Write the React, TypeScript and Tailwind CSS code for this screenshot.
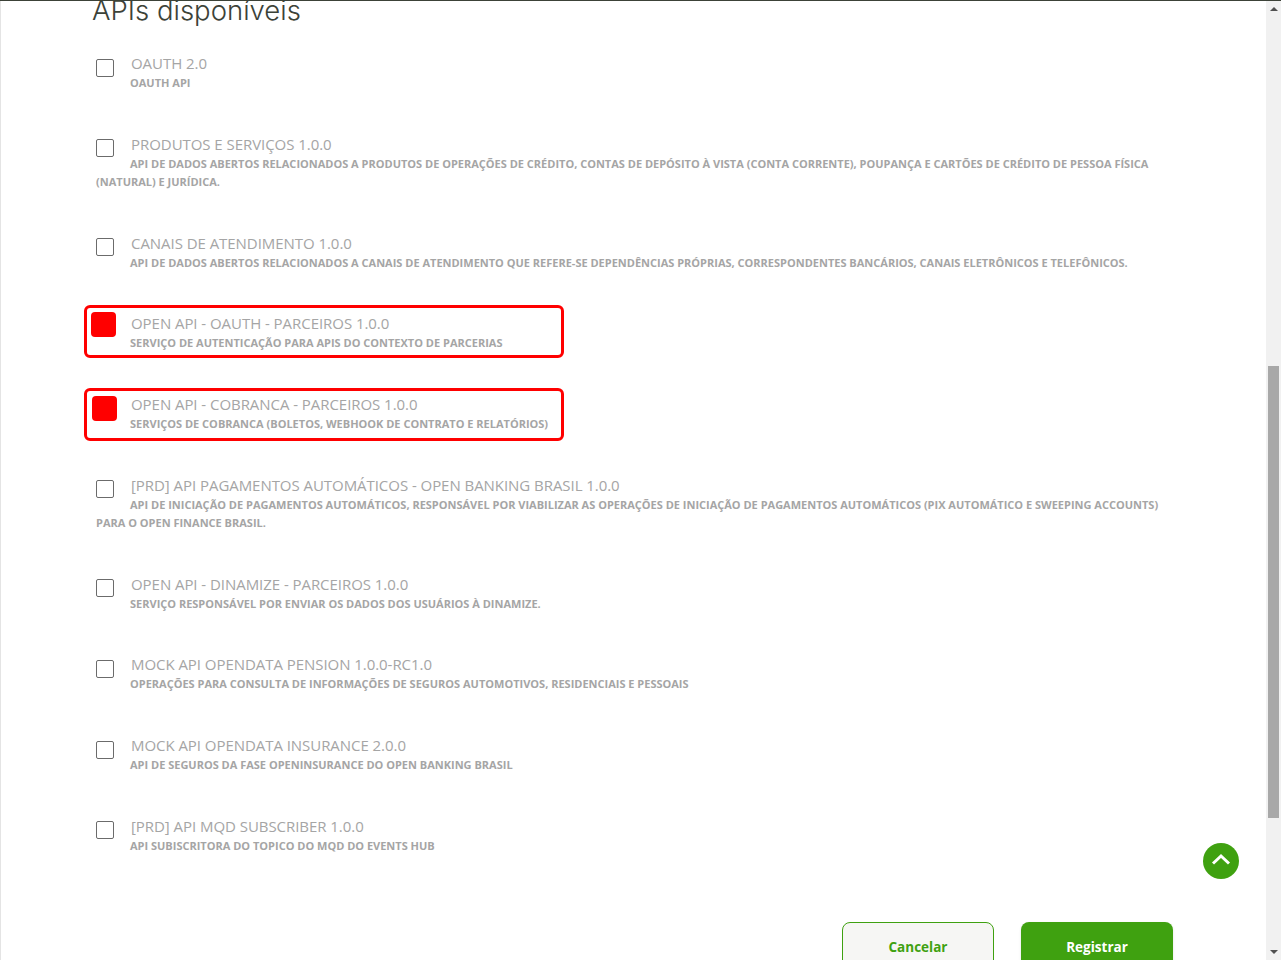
const apis = [
	{ name: 'OAUTH 2.0', desc: 'OAUTH API' },
	{
		name: 'PRODUTOS E SERVIÇOS 1.0.0',
		desc: 'API DE DADOS ABERTOS RELACIONADOS A PRODUTOS DE OPERAÇÕES DE CRÉDITO, CONTAS DE DEPÓSITO À VISTA (CONTA CORRENTE), POUPANÇA E CARTÕES DE CRÉDITO DE PESSOA FÍSICA (NATURAL) E JURÍDICA.',
	},
	{
		name: 'CANAIS DE ATENDIMENTO 1.0.0',
		desc: 'API DE DADOS ABERTOS RELACIONADOS A CANAIS DE ATENDIMENTO QUE REFERE-SE DEPENDÊNCIAS PRÓPRIAS, CORRESPONDENTES BANCÁRIOS, CANAIS ELETRÔNICOS E TELEFÔNICOS.',
	},
	{
		name: 'OPEN API - OAUTH - PARCEIROS 1.0.0',
		desc: 'SERVIÇO DE AUTENTICAÇÃO PARA APIS DO CONTEXTO DE PARCERIAS',
		marked: 'first',
	},
	{
		name: 'OPEN API - COBRANCA - PARCEIROS 1.0.0',
		desc: 'SERVIÇOS DE COBRANCA (BOLETOS, WEBHOOK DE CONTRATO E RELATÓRIOS)',
		marked: 'second',
	},
	{
		name: '[PRD] API PAGAMENTOS AUTOMÁTICOS - OPEN BANKING BRASIL 1.0.0',
		desc: 'API DE INICIAÇÃO DE PAGAMENTOS AUTOMÁTICOS, RESPONSÁVEL POR VIABILIZAR AS OPERAÇÕES DE INICIAÇÃO DE PAGAMENTOS AUTOMÁTICOS (PIX AUTOMÁTICO E SWEEPING ACCOUNTS) PARA O OPEN FINANCE BRASIL.',
	},
	{
		name: 'OPEN API - DINAMIZE - PARCEIROS 1.0.0',
		desc: 'SERVIÇO RESPONSÁVEL POR ENVIAR OS DADOS DOS USUÁRIOS À DINAMIZE.',
	},
	{
		name: 'MOCK API OPENDATA PENSION 1.0.0-RC1.0',
		desc: 'OPERAÇÕES PARA CONSULTA DE INFORMAÇÕES DE SEGUROS AUTOMOTIVOS, RESIDENCIAIS E PESSOAIS',
	},
	{
		name: 'MOCK API OPENDATA INSURANCE 2.0.0',
		desc: 'API DE SEGUROS DA FASE OPENINSURANCE DO OPEN BANKING BRASIL',
	},
	{ name: '[PRD] API MQD SUBSCRIBER 1.0.0', desc: 'API SUBISCRITORA DO TOPICO DO MQD DO EVENTS HUB' },
];

function ApiRow({ name, desc, marked }: { name: string; desc: string; marked?: string }) {
	return (
		<div className="relative mb-[41.78px] flow-root">
			<div className="float-left h-[37px] w-[34px] pt-[5.5px]">
				<div className="h-[18px] w-[18px] rounded-[2px] border border-[#6b6b6b] bg-white" />
			</div>
			<div className="h-[21px] indent-[1px] text-[15px] leading-[20px] tracking-[-0.05px] text-[#a5a5a5]">{name}</div>
			<div className="text-[11px] leading-[18px] font-bold text-[#a5a5a5]">{desc}</div>
			{marked === 'first' && (
				<>
					<div className="absolute top-[-8px] left-[-12px] h-[53px] w-[480px] rounded-[6px] border-[3px] border-[#ff0000]" />
					<div className="absolute top-[-1px] left-[-5px] h-[25px] w-[25px] rounded-[4px] bg-[#ff0000]" />
				</>
			)}
			{marked === 'second' && (
				<>
					<div className="absolute top-[-6px] left-[-12px] h-[53px] w-[480px] rounded-[6px] border-[3px] border-[#ff0000]" />
					<div className="absolute top-[1.5px] left-[-4px] h-[25px] w-[25px] rounded-[4px] bg-[#ff0000]" />
				</>
			)}
		</div>
	);
}

export default function App() {
	return (
		<div className="relative flex h-[960px] overflow-hidden border-t border-[#3c4238] bg-white font-['Open_Sans',sans-serif]">
			<main className="min-w-0 flex-1 border-l border-[#e4e4e4] pr-[93px] pl-[95px]">
				<h1 className="mt-[-1px] mb-[33px] ml-[-4px] font-['Inter',sans-serif] text-[27.5px] leading-[20px] font-light text-[#3c4238]">
					APIs disponíveis
				</h1>
				{apis.map((api) => (
					<ApiRow key={api.name} {...api} />
				))}
				<div className="flex justify-end gap-[27px] pt-[25px]">
					<button className="h-[60px] w-[152px] rounded-[8px] border border-[#3fa110] bg-[#f6f6f4] pb-[10px] text-[13.5px] font-bold text-[#3fa110]">
						Cancelar
					</button>
					<button className="h-[60px] w-[152px] rounded-[8px] bg-[#3fa110] pb-[10px] text-[13.5px] font-bold text-white shadow-sm">
						Registrar
					</button>
				</div>
			</main>
			<div className="relative flex w-[15px] flex-col items-center bg-[#f1f1f1]">
				<div className="mt-[6px] h-0 w-0 border-x-[4px] border-b-[4px] border-x-transparent border-b-[#505050]" />
				<div className="mt-[355px] h-[452px] w-[11px] bg-[#a8a8a8]" />
				<div className="mt-auto mb-[6px] h-0 w-0 border-x-[4px] border-t-[4px] border-x-transparent border-t-[#505050]" />
			</div>
			<button className="absolute top-[842px] left-[1203px] flex h-[36px] w-[36px] items-center justify-center rounded-full bg-[#3fa110] pb-[4px]">
				<svg width="20" height="12" viewBox="0 0 20 12" fill="none" stroke="#fff" strokeWidth="3">
					<path d="M2 10.5 10 3l8 7.5" />
				</svg>
			</button>
		</div>
	);
}
